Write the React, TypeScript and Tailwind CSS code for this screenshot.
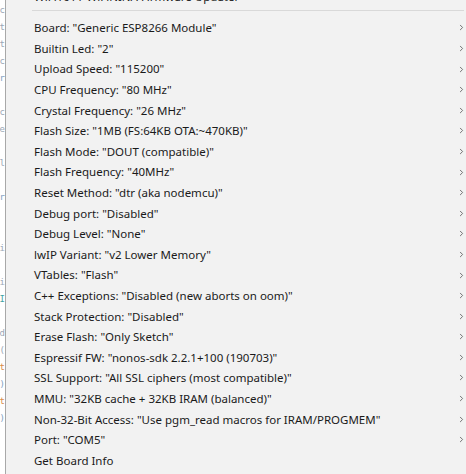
import { ChevronRight } from "lucide-react";

const items: { label: string; sub: boolean }[] = [
  { label: 'Board: "Generic ESP8266 Module"', sub: true },
  { label: 'Builtin Led: "2"', sub: true },
  { label: 'Upload Speed: "115200"', sub: true },
  { label: 'CPU Frequency: "80 MHz"', sub: true },
  { label: 'Crystal Frequency: "26 MHz"', sub: true },
  { label: 'Flash Size: "1MB (FS:64KB OTA:~470KB)"', sub: true },
  { label: 'Flash Mode: "DOUT (compatible)"', sub: true },
  { label: 'Flash Frequency: "40MHz"', sub: true },
  { label: 'Reset Method: "dtr (aka nodemcu)"', sub: true },
  { label: 'Debug port: "Disabled"', sub: true },
  { label: 'Debug Level: "None"', sub: true },
  { label: 'lwIP Variant: "v2 Lower Memory"', sub: true },
  { label: 'VTables: "Flash"', sub: true },
  { label: 'C++ Exceptions: "Disabled (new aborts on oom)"', sub: true },
  { label: 'Stack Protection: "Disabled"', sub: true },
  { label: 'Erase Flash: "Only Sketch"', sub: true },
  { label: 'Espressif FW: "nonos-sdk 2.2.1+100 (190703)"', sub: true },
  { label: 'SSL Support: "All SSL ciphers (most compatible)"', sub: true },
  { label: 'MMU: "32KB cache + 32KB IRAM (balanced)"', sub: true },
  { label: 'Non-32-Bit Access: "Use pgm_read macros for IRAM/PROGMEM"', sub: true },
  { label: 'Port: "COM5"', sub: true },
  { label: "Get Board Info", sub: false },
];

// scraps of the code editor peeking out behind the menu
const code = [
  ["c", "text-[#9aa7b5]"],
  ["t", "text-[#9aa7b5]"],
  ["t", "text-[#9aa7b5]"],
  ["c", "text-[#9aa7b5]"],
  ["r", "text-[#7f9fbf]"],
  ["", ""],
  ["c", "text-[#9aa7b5]"],
  ["e", "text-[#9aa7b5]"],
  ["", ""],
  ["l", "text-[#9aa7b5]"],
  ["", ""],
  ["r", "text-[#7f9fbf]"],
  ["", ""],
  ["", ""],
  ["i", "text-[#9aa7b5]"],
  ["", ""],
  ["i", "text-[#9aa7b5]"],
  ["I", "text-[#3fa3a3]"],
  ["", ""],
  ["d", "text-[#9aa7b5]"],
  ["(", "text-[#9aa7b5]"],
  ["t", "text-[#d98c4a]"],
  [")", "text-[#7f9fbf]"],
  ["t", "text-[#d98c4a]"],
  [")", "text-[#7f9fbf]"],
];

export default function App() {
  return (
    <div className="w-[466px] h-[474px] overflow-hidden flex bg-white font-['Noto_Sans',sans-serif]">
      {/* editor behind */}
      <div className="w-[5px] shrink-0 overflow-hidden flex flex-col items-end pt-[2px] font-['DejaVu_Sans_Mono',monospace] text-[9px] leading-[17px]">
        {code.map(([c, cls], i) => (
          <span key={i} className={`h-[17px] ${cls}`}>
            {c}
          </span>
        ))}
      </div>

      {/* menu */}
      <div className="flex-1 bg-[#f2f2f2] border-l border-[#a8a8a8] overflow-hidden">
        <div className="-mt-[14px] flex flex-col">
          <div className="h-[20.6px] flex items-center pl-[28px] text-[11.5px] text-[#1a1a1a]">
            WiFi101 / WiFiNINA Firmware Updater
          </div>
          <div className="mt-[3px] mb-[7px] ml-[26px] mr-[2px] h-px bg-[#d9d9d9]" />
          {items.map((it) => (
            <div
              key={it.label}
              className="h-[20.6px] flex items-center justify-between pl-[28px] pr-0 text-[11.5px] text-[#1a1a1a] whitespace-nowrap"
            >
              <span>{it.label}</span>
              {it.sub && (
                <ChevronRight className="w-[9px] h-[9px] text-[#6b6b6b]" strokeWidth={2.5} />
              )}
            </div>
          ))}
        </div>
      </div>
    </div>
  );
}
